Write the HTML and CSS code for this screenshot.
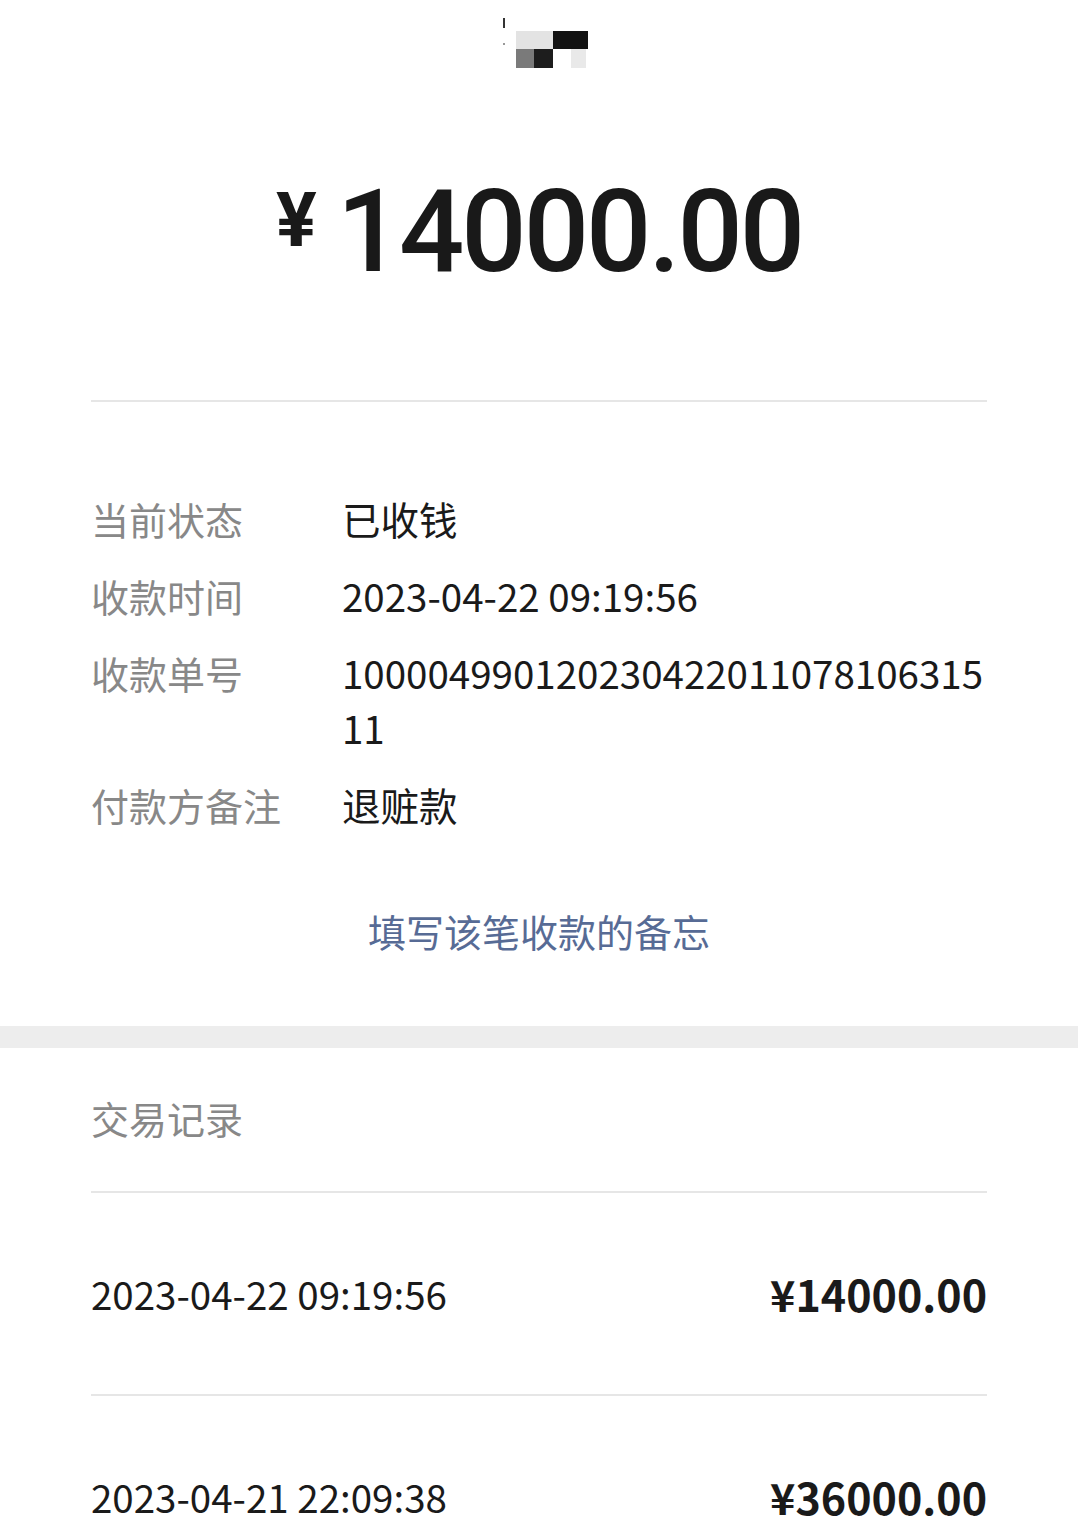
FILE: index.html
```html
<!DOCTYPE html>
<html lang="zh-CN">
<head>
    <meta charset="UTF-8">
    <meta name="viewport" content="width=device-width, initial-scale=1.0">
    <title>收款详情</title>
    <link rel="stylesheet" href="styles.css">
</head>
<body>
    <div class="detail">
        <div class="logo-row">
            <div class="logo-marks">
                <span class="tick"></span>
                <span class="dot"></span>
            </div>
            <div class="logo">
                <div class="logo-line">
                    <span class="px px-light" style="width: 37px"></span>
                    <span class="px px-black" style="width: 35px"></span>
                </div>
                <div class="logo-line">
                    <span class="px px-grey" style="width: 18px"></span>
                    <span class="px px-dark" style="width: 19px"></span>
                    <span class="px px-white" style="width: 18px"></span>
                    <span class="px px-pale" style="width: 15px"></span>
                </div>
            </div>
        </div>

        <div class="amount">
            <span class="amount-sign">¥</span><span class="amount-value">14000.00</span>
        </div>

        <div class="divider"></div>

        <div class="info">
            <div class="info-row">
                <div class="info-label">当前状态</div>
                <div class="info-value">已收钱</div>
            </div>
            <div class="info-row">
                <div class="info-label">收款时间</div>
                <div class="info-value">2023-04-22 09:19:56</div>
            </div>
            <div class="info-row">
                <div class="info-label">收款单号</div>
                <div class="info-value number">10000499012023042201107810631511</div>
            </div>
            <div class="info-row">
                <div class="info-label">付款方备注</div>
                <div class="info-value">退赃款</div>
            </div>
        </div>

        <div class="memo-link">填写该笔收款的备忘</div>
    </div>

    <div class="band"></div>

    <div class="records">
        <div class="records-title">交易记录</div>
        <div class="record">
            <span class="record-time">2023-04-22 09:19:56</span>
            <span class="record-amount">¥14000.00</span>
        </div>
        <div class="record">
            <span class="record-time">2023-04-21 22:09:38</span>
            <span class="record-amount">¥36000.00</span>
        </div>
    </div>
</body>
</html>
```

FILE: styles.css
```css
body {
    margin: 0;
    background-color: #ffffff;
    font-family: "Noto Sans CJK SC", "Noto Sans", sans-serif;
    color: #1a1a1a;
}

.detail {
    padding: 0 91px;
}

/* pixelated avatar at the top */
.logo-row {
    display: flex;
    justify-content: center;
    padding-top: 18px;
    padding-left: 12px;
}
.logo-marks {
    display: flex;
    flex-direction: column;
    width: 13px;
}
.tick {
    width: 2px;
    height: 10px;
    background-color: #333;
}
.dot {
    width: 2px;
    height: 2px;
    margin-top: 15px;
    background-color: #999;
}
.logo {
    display: flex;
    flex-direction: column;
    padding-top: 13px;
}
.logo-line {
    display: flex;
}
.logo-line .px {
    height: 19px;
}
.logo-line:first-child .px {
    height: 18px;
}
.px-light { background-color: #e3e3e3; }
.px-black { background-color: #121212; }
.px-grey { background-color: #7a7a7a; }
.px-dark { background-color: #1d1d1d; }
.px-white { background-color: #ffffff; }
.px-pale { background-color: #e9e9e9; }

.amount {
    display: flex;
    justify-content: center;
    align-items: baseline;
    margin-top: 89px;
    height: 150px;
    line-height: 150px;
    font-family: Roboto, "Noto Sans", sans-serif;
    color: #191919;
}
.amount-sign {
    font-size: 76px;
    font-weight: 700;
    margin-right: 20px;
    position: relative;
    top: -25px;
}
.amount-value {
    font-size: 115px;
    font-weight: 500;
    letter-spacing: -3px;
}

.divider {
    margin-top: 93px;
    height: 2px;
    background-color: #e6e6e6;
}

.info {
    display: flex;
    flex-direction: column;
    gap: 22px;
    padding-top: 89px;
}
.info-row {
    display: grid;
    grid-template-columns: 251px 1fr;
    font-size: 38px;
    line-height: 55px;
}
.info-label {
    color: #888888;
}
.info-value {
    font-size: 38.5px;
    color: #1a1a1a;
}
.number {
    word-break: break-all;
}

.memo-link {
    margin-top: 71px;
    text-align: center;
    font-size: 38px;
    line-height: 55px;
    color: #576b95;
}

.band {
    margin-top: 68px;
    height: 22px;
    background-color: #ededed;
}

.records {
    padding: 0 91px;
}
.records-title {
    padding-top: 42px;
    padding-bottom: 46px;
    border-bottom: 2px solid #e6e6e6;
    font-size: 38px;
    line-height: 55px;
    color: #888888;
}
.record {
    display: flex;
    justify-content: space-between;
    align-items: center;
    padding: 73px 0;
    border-bottom: 2px solid #e6e6e6;
    font-size: 38.5px;
    line-height: 55px;
}
.record-time {
    color: #1a1a1a;
}
.record-amount {
    font-size: 43px;
    font-weight: 700;
    color: #1a1a1a;
}
```
